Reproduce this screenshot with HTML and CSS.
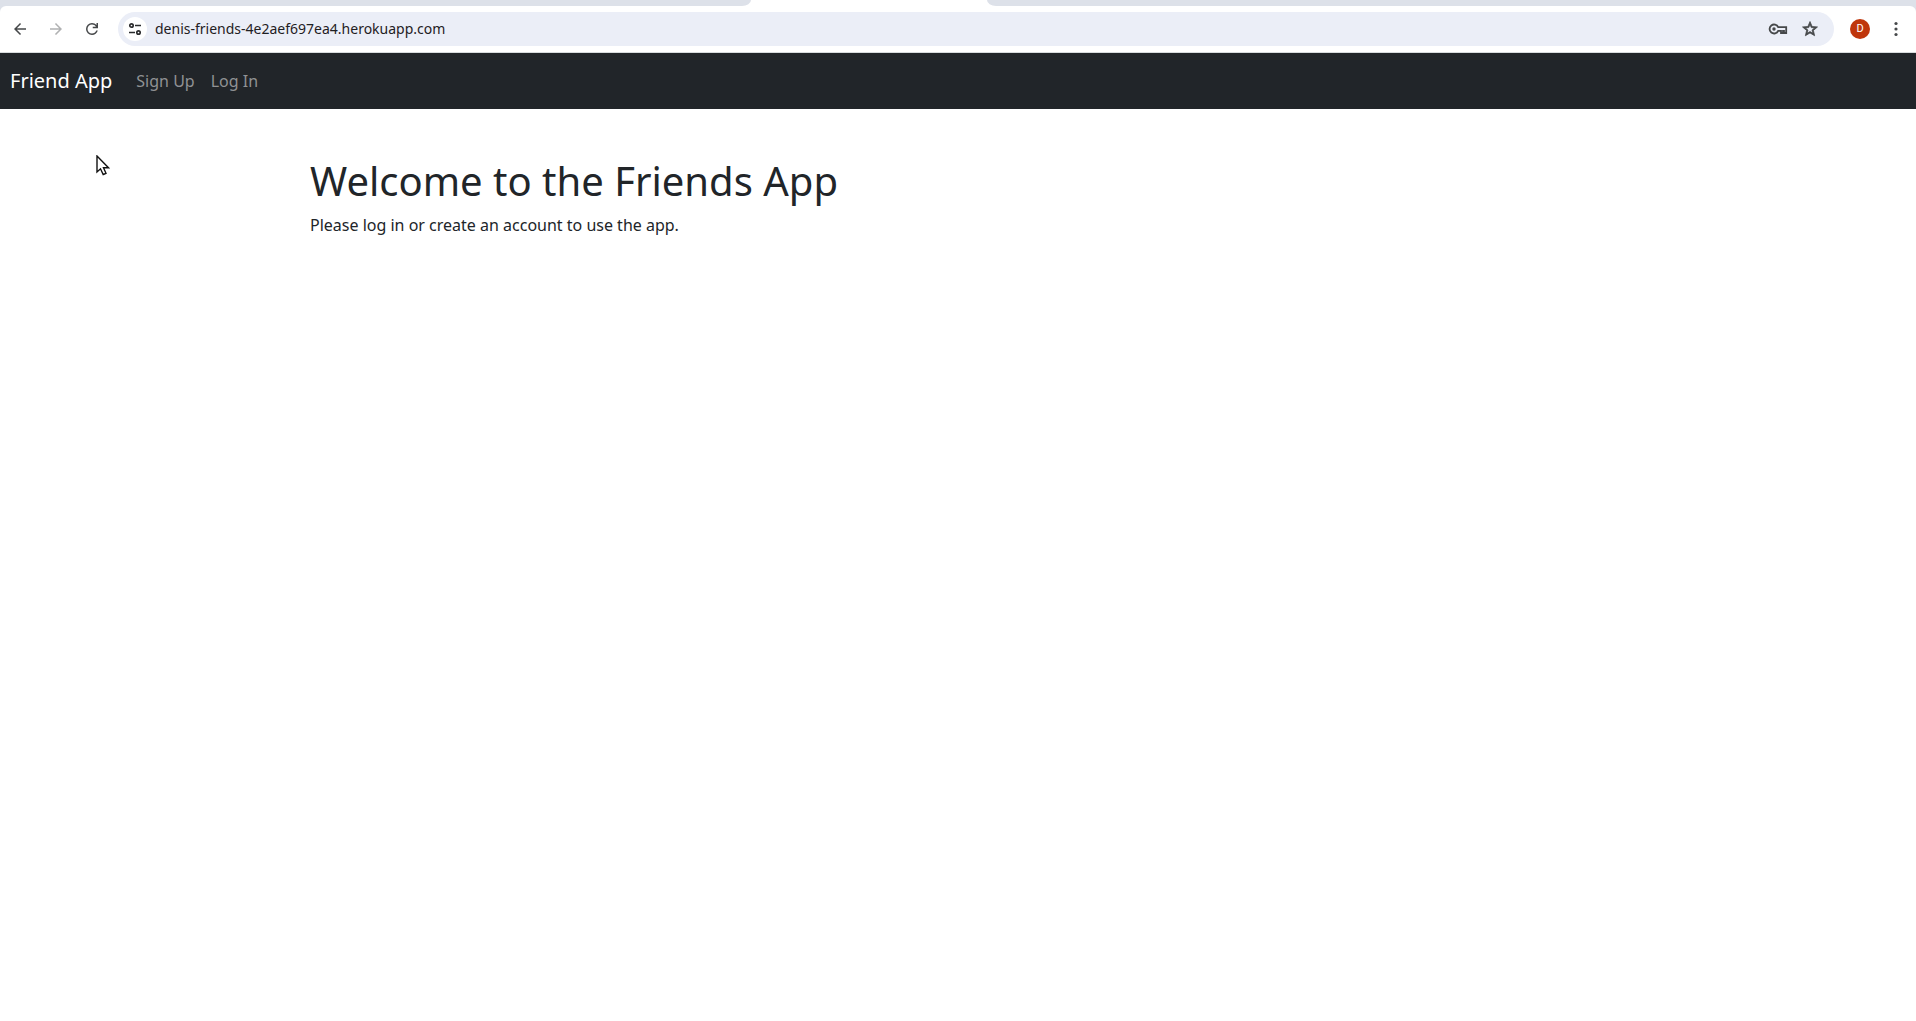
FILE: index.html
```html
<!DOCTYPE html>
<html lang="en">
<head>
<meta charset="utf-8">
<meta name="viewport" content="width=device-width, initial-scale=1">
<title>Friend App</title>
<link rel="stylesheet" href="styles.css">
</head>
<body>
<div class="browser">
  <div class="tabs"><span class="tabs-before"></span><span class="tab-active"></span><span class="tabs-after"></span></div>
  <div class="toolbar">
    <button class="tool" type="button" aria-label="Back"><svg class="icon" viewBox="0 -960 960 960"><path d="m313-440 224 224-57 56-320-320 320-320 57 56-224 224h487v80H313Z"/></svg></button>
    <button class="tool" type="button" aria-label="Forward" disabled><svg class="icon" viewBox="0 -960 960 960"><path d="M647-440H160v-80h487L423-744l57-56 320 320-320 320-57-56 224-224Z"/></svg></button>
    <button class="tool" type="button" aria-label="Reload"><svg class="icon" viewBox="0 -960 960 960"><path d="M480-160q-134 0-227-93t-93-227q0-134 93-227t227-93q69 0 132 28.500T720-690v-110h80v280H520v-80h168q-32-56-87.500-88T480-720q-100 0-170 70t-70 170q0 100 70 170t170 70q77 0 139-44t87-116h84q-28 106-114 173t-196 67Z"/></svg></button>
    <div class="omnibox">
      <button class="site-info" type="button" aria-label="Site information"><svg class="icon-site" viewBox="0 0 14 14" fill="none" stroke="currentColor" stroke-width="1.700"><circle cx="3.500" cy="3.500" r="1.700"/><path d="M7 3.500h6M1 10.500h6"/><circle cx="10.500" cy="10.500" r="1.700"/></svg></button>
      <input class="url" type="text" aria-label="Address" value="denis-friends-4e2aef697ea4.herokuapp.com">
      <button class="omni-action" type="button" aria-label="Passwords"><svg class="icon-key" viewBox="0 0 20 12" fill="none" stroke="currentColor" stroke-width="1.800"><circle cx="6" cy="6" r="1.700" fill="currentColor" stroke="none"/><path d="M10.200 4.200A4.500 4.500 0 1 0 10.200 7.800H13V10H15V7.800H16V10H18.200V4.200Z"/></svg></button>
      <button class="omni-action" type="button" aria-label="Bookmark"><svg class="icon-star" viewBox="0 0 24 24"><path d="M22 9.240l-7.190-.620L12 2 9.190 8.630 2 9.240l5.460 4.730L5.820 21 12 17.270 18.180 21l-1.630-7.030L22 9.240zM12 15.400l-3.760 2.270 1-4.280-3.320-2.880 4.380-.380L12 6.100l1.710 4.040 4.380.380-3.320 2.880 1 4.280L12 15.400z"/></svg></button>
    </div>
    <button class="tool" type="button" aria-label="Profile"><span class="avatar">D</span></button>
    <button class="tool" type="button" aria-label="Menu"><svg class="icon" viewBox="0 0 18 18"><circle cx="9" cy="3.500" r="1.600"/><circle cx="9" cy="9" r="1.600"/><circle cx="9" cy="14.500" r="1.600"/></svg></button>
  </div>
</div>
<nav class="navbar">
  <a class="brand" href="#">Friend App</a>
  <a class="nav-link" href="#">Sign Up</a>
  <a class="nav-link" href="#">Log In</a>
</nav>
<main class="container">
  <h1>Welcome to the Friends App</h1>
  <p>Please log in or create an account to use the app.</p>
</main>
<svg class="cursor" viewBox="0 0 14 22" aria-hidden="true"><path d="M1 1V17L4.500 13.800L7.200 19.500L10 18.300L7.500 12.800H12.500Z" fill="#fff" stroke="#111" stroke-width="1.400"/></svg>
</body>
</html>
```
FILE: styles.css
```css
* { box-sizing: border-box; }
body {
  margin: 0;
  background: #fff;
  color: #212529;
  font: 16px/24px "Noto Sans", sans-serif;
}
button {
  display: flex;
  align-items: center;
  justify-content: center;
  padding: 0;
  border: 0;
  background: none;
  color: #46484a;
  font: inherit;
}
.browser { background: #dde1e9; }
.tabs {
  display: grid;
  grid-template-columns: 39.2% 236px 1fr;
  height: 6px;
  background: #fff;
}
.tabs-before, .tabs-after { background: #dde1e9; }
.tabs-before { border-bottom-right-radius: 9px 6px; }
.tabs-after { border-bottom-left-radius: 9px 6px; }
.toolbar {
  display: flex;
  align-items: center;
  gap: 6px;
  height: 47px;
  padding: 0 5px;
  background: #fff;
  border-bottom: 1px solid #d8dcdd;
  border-radius: 6px 6px 0 0;
}
.tool { width: 30px; height: 30px; }
.tool:disabled { color: #b0b1b2; }
.icon { width: 18px; height: 18px; fill: currentColor; }
.icon-star {
  width: 18px;
  height: 18px;
  fill: currentColor;
  stroke: currentColor;
  stroke-width: 1;
}
.omnibox {
  display: flex;
  align-items: center;
  flex: 1;
  gap: 8px;
  height: 34px;
  margin: 0 5px;
  padding: 0 12px 0 5px;
  border-radius: 17px;
  background: #ebeef7;
}
.site-info {
  width: 24px;
  height: 24px;
  border-radius: 50%;
  background: #fff;
  color: #2b2c2e;
}
.icon-site { width: 14px; height: 14px; }
.url {
  flex: 1;
  min-width: 0;
  padding: 0;
  border: 0;
  outline: 0;
  background: none;
  color: #1f2023;
  font: 14px/20px "Noto Sans", sans-serif;
}
.omni-action { width: 24px; height: 24px; }
.icon-key { width: 20px; height: 12px; }
.avatar {
  width: 20px;
  height: 20px;
  border-radius: 50%;
  background: #bf360c;
  color: #fff;
  font: 11px/20px Roboto, sans-serif;
}
.navbar {
  display: flex;
  align-items: center;
  height: 56px;
  padding: 0 10px;
  background: #212529;
}
.navbar a { text-decoration: none; }
.brand {
  margin-right: 16px;
  color: #fff;
  font-size: 20px;
}
.nav-link {
  padding: 8px;
  color: #909294;
}
.container {
  max-width: 1320px;
  margin: 48px auto 0;
  padding: 0 12px;
}
h1 {
  margin: 0 0 8px;
  font-size: 40px;
  font-weight: 400;
  line-height: 48px;
}
p { margin: 0; }
.cursor {
  position: absolute;
  left: 96px;
  top: 155px;
  width: 14px;
  height: 22px;
}
```
